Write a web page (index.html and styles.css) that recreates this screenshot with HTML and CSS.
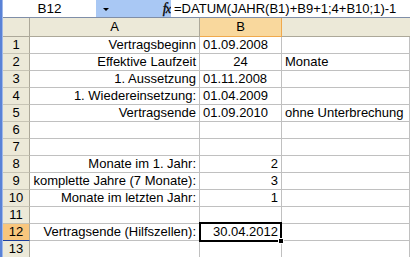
FILE: index.html
```html
<!DOCTYPE html>
<html>
<head>
<meta charset="utf-8">
<link rel="stylesheet" href="styles.css">
</head>
<body>
<div class="window">
  <div class="stripe"></div>
  <div class="main">
    <div class="toolbar">
      <div class="namebox">B12</div>
      <div class="mid">
        <span class="arrow"></span>
        <span class="fx">f<span class="x">x</span></span>
      </div>
      <div class="formula">=DATUM(JAHR(B1)+B9+1;4+B10;1)-1</div>
    </div>
    <div class="sheet">
      <div class="hd corner"></div><div class="hd col">A</div><div class="hd col sel">B</div><div class="hd col last"></div>

      <div class="rh">1</div><div class="c r">Vertragsbeginn</div><div class="c l">01.09.2008</div><div class="c"></div>
      <div class="rh">2</div><div class="c r">Effektive Laufzeit</div><div class="c m">24</div><div class="c l">Monate</div>
      <div class="rh">3</div><div class="c r">1. Aussetzung</div><div class="c l">01.11.2008</div><div class="c"></div>
      <div class="rh">4</div><div class="c r">1. Wiedereinsetzung:</div><div class="c l">01.04.2009</div><div class="c"></div>
      <div class="rh">5</div><div class="c r">Vertragsende</div><div class="c l">01.09.2010</div><div class="c l">ohne Unterbrechung</div>
      <div class="rh">6</div><div class="c"></div><div class="c"></div><div class="c"></div>
      <div class="rh">7</div><div class="c"></div><div class="c"></div><div class="c"></div>
      <div class="rh">8</div><div class="c r">Monate im 1. Jahr:</div><div class="c r">2</div><div class="c"></div>
      <div class="rh">9</div><div class="c r">komplette Jahre (7 Monate):</div><div class="c r">3</div><div class="c"></div>
      <div class="rh">10</div><div class="c r">Monate im letzten Jahr:</div><div class="c r">1</div><div class="c"></div>
      <div class="rh">11</div><div class="c"></div><div class="c"></div><div class="c"></div>
      <div class="rh selrow">12</div><div class="c r">Vertragsende (Hilfszellen):</div><div class="c r active">30.04.2012<span class="handle"></span></div><div class="c"></div>
      <div class="rh">13</div><div class="c"></div><div class="c"></div><div class="c"></div>
    </div>
  </div>
</div>
</body>
</html>
```

FILE: styles.css
```css
* { box-sizing: border-box; }
html, body { margin: 0; padding: 0; }
body {
  width: 410px;
  height: 257px;
  overflow: hidden;
  background: #fff;
  font-family: "Liberation Sans", Arial, sans-serif;
  font-size: 13px;
  color: #000;
}
.window { display: flex; height: 257px; }
.stripe {
  width: 3px;
  flex: none;
  background: #5a82d6;
  border-right: 1px solid #9fb8ea;
}
.main { flex: 1; display: flex; flex-direction: column; min-width: 0; }
.toolbar {
  display: flex;
  height: 18px;
  border-bottom: 1px solid #7f8ea8;
  flex: none;
}
.namebox {
  width: 93px;
  background: #fff;
  text-align: center;
  line-height: 17px;
  font-size: 13.5px;
}
.mid {
  width: 75px;
  background: #a9c8f4;
  display: flex;
  align-items: center;
  justify-content: space-between;
  padding: 0 1px 0 7px;
}
.arrow {
  width: 0; height: 0;
  border-left: 3px solid transparent;
  border-right: 3px solid transparent;
  border-top: 3px solid #000;
  margin-top: 2px;
}
.fx {
  font-family: "Liberation Serif", serif;
  font-style: italic;
  font-size: 14px;
  line-height: 17px;
  letter-spacing: -1px;
  -webkit-text-stroke: 0.3px #000;
}
.fx .x { font-size: 12px; }
.formula {
  flex: 1;
  background: #fff;
  padding-left: 3px;
  line-height: 17px;
  white-space: nowrap;
}
.sheet {
  display: grid;
  grid-template-columns: 27px 170px 82px 1fr;
  grid-template-rows: 19px repeat(13, 17px);
}
.hd {
  background: #ece9d8;
  border-right: 1px solid #aca899;
  border-bottom: 1px solid #aca899;
  text-align: center;
  line-height: 18px;
}
.hd.last { border-right: none; }
.hd.sel {
  background: #f9d89d;
  border-right: 1px solid #f0a94c;
  border-bottom: 1px solid #f0a94c;
}
.rh {
  background: #ece9d8;
  border-right: 1px solid #aca899;
  border-bottom: 1px solid #c7c4b5;
  text-align: center;
  line-height: 16px;
}
.rh.selrow {
  background: #f8c67d;
  border-bottom: 1px solid #1d3f9c;
}
.c {
  border-right: 1px solid #c0c0c0;
  border-bottom: 1px solid #c0c0c0;
  line-height: 16px;
  white-space: nowrap;
  overflow: visible;
  padding: 0 3px;
}
.c.r { text-align: right; }
.c.l { text-align: left; }
.c.m { text-align: center; }
.active { position: relative; }
.active::before {
  content: "";
  position: absolute;
  left: -1px; top: -2px; right: -1px; bottom: -2px;
  border: 2px solid #000;
}
.handle {
  position: absolute;
  right: -3px;
  bottom: -4px;
  width: 6px;
  height: 6px;
  background: #000;
  border: 1px solid #fff;
}
```
